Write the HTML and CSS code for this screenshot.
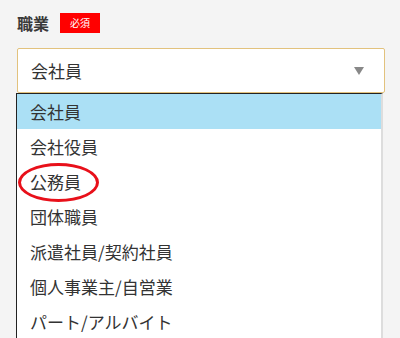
FILE: index.html
```html
<!DOCTYPE html>
<html>
<head>
    <title>職業</title>
    <link rel="stylesheet" href="styles.css">
</head>
<body>
    <div class="field">
        <div class="field-label">
            <span class="label-text">職業</span>
            <span class="required">必須</span>
        </div>
        <div class="select">
            <span class="select-value">会社員</span>
            <span class="select-arrow"></span>
        </div>
        <ul class="options">
            <li class="option selected">会社員</li>
            <li class="option">会社役員</li>
            <li class="option marked">公務員</li>
            <li class="option">団体職員</li>
            <li class="option">派遣社員/契約社員</li>
            <li class="option">個人事業主/自営業</li>
            <li class="option">パート/アルバイト</li>
        </ul>
    </div>
</body>
</html>
```

FILE: styles.css
```css
body {
    margin: 0;
    background: #f4f4f4;
    font-family: "Noto Sans CJK JP", "Noto Sans", sans-serif;
    color: #333;
    overflow: hidden;
}
.field {
    padding: 12px 16px 0 16px;
}
.field-label {
    display: flex;
    align-items: center;
    gap: 11px;
    height: 22px;
    padding-left: 1px;
}
.label-text {
    font-size: 16px;
    font-weight: bold;
    color: #3a3a3a;
}
.required {
    display: inline-block;
    background: #f00;
    color: #fff;
    font-size: 10px;
    line-height: 20px;
    padding: 0 10px;
}
.select {
    display: flex;
    align-items: center;
    justify-content: space-between;
    box-sizing: border-box;
    height: 45px;
    margin: 14px 0 0 1px;
    width: 368px;
    padding: 0 20px 0 13px;
    background: #fff;
    border: 1px solid #e2c27d;
    border-radius: 2px;
}
.select-value {
    font-size: 17px;
}
.select-arrow {
    width: 0;
    height: 0;
    border-left: 5px solid transparent;
    border-right: 5px solid transparent;
    border-top: 8px solid #888;
}
.options {
    list-style: none;
    margin: 0;
    padding: 0;
    width: 367px;
    box-sizing: border-box;
    background: #fff;
    border-top: 1px solid #222;
    border-left: 1px solid #222;
    border-right: 2px solid #ddd;
}
.option {
    position: relative;
    height: 35px;
    line-height: 35px;
    padding-left: 13px;
    font-size: 17px;
}
.option.selected {
    background: #abe0f5;
}
.option.marked::after {
    content: "";
    position: absolute;
    left: 1px;
    top: -1px;
    width: 75px;
    height: 33px;
    border: 3px solid #e8101a;
    border-radius: 50%;
}
```
